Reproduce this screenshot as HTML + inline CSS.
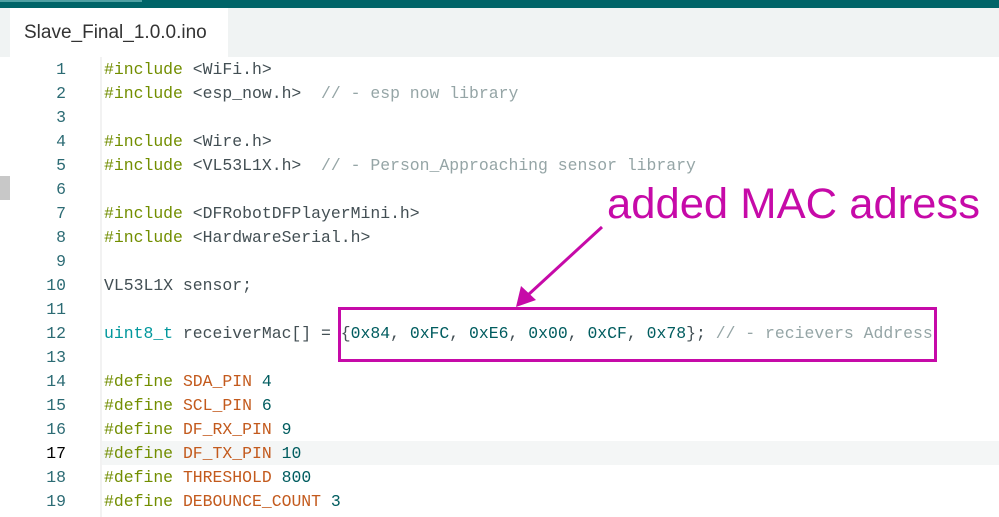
<!DOCTYPE html>
<html><head><style>
body{margin:0;width:999px;height:517px;overflow:hidden;background:#fff;position:relative;font-family:"Liberation Sans",sans-serif}
.top{position:absolute;left:0;top:0;width:999px;height:8px;background:#006468}
.top2{position:absolute;left:0;top:0;width:142px;height:2px;background:#4fa0a3}
.tabbar{position:absolute;left:0;top:8px;width:999px;height:49px;background:#f0f3f3}
.tab{position:absolute;left:10px;top:8px;width:218px;height:49px;background:#fff;font-size:19px;color:#333;line-height:50px;padding-left:14px;box-sizing:border-box}
.hl{position:absolute;left:102px;top:441px;width:897px;height:24px;background:#f4f6f6}
.mark{position:absolute;left:0;top:176px;width:10px;height:24px;background:#c8c8c8}
.gut{position:absolute;left:100px;top:57px;width:2px;height:460px;background:#f2f2f2}
.ln,.code{position:absolute;top:58px;font-family:"Liberation Mono",monospace;font-size:16.45px;line-height:24px;white-space:pre}
.ln{left:30px;width:36px;text-align:right;color:#2c6b74}
.code{left:104px;color:#434f54}
.k{color:#728e00}.c{color:#95a5a6}.d{color:#c35a1d}.n{color:#005c5f}.t{color:#00979c}
</style></head><body>
<div class="top"></div><div class="top2"></div>
<div class="tabbar"></div><div class="tab">Slave_Final_1.0.0.ino</div>
<div class="hl"></div><div class="mark"></div><div class="gut"></div>
<div class="ln">1
2
3
4
5
6
7
8
9
10
11
12
13
14
15
16
<span style="color:#000">17</span>
18
19</div>
<div class="code"><span class="k">#include</span> &lt;WiFi.h&gt;
<span class="k">#include</span> &lt;esp_now.h&gt;  <span class="c">// - esp now library</span>

<span class="k">#include</span> &lt;Wire.h&gt;
<span class="k">#include</span> &lt;VL53L1X.h&gt;  <span class="c">// - Person_Approaching sensor library</span>

<span class="k">#include</span> &lt;DFRobotDFPlayerMini.h&gt;
<span class="k">#include</span> &lt;HardwareSerial.h&gt;

VL53L1X sensor;

<span class="t">uint8_t</span> receiverMac[] = {<span class="n">0x84</span>, <span class="n">0xFC</span>, <span class="n">0xE6</span>, <span class="n">0x00</span>, <span class="n">0xCF</span>, <span class="n">0x78</span>}; <span class="c">// - recievers Address</span>

<span class="k">#define</span> <span class="d">SDA_PIN</span> <span class="n">4</span>
<span class="k">#define</span> <span class="d">SCL_PIN</span> <span class="n">6</span>
<span class="k">#define</span> <span class="d">DF_RX_PIN</span> <span class="n">9</span>
<span class="k">#define</span> <span class="d">DF_TX_PIN</span> <span class="n">10</span>
<span class="k">#define</span> <span class="d">THRESHOLD</span> <span class="n">800</span>
<span class="k">#define</span> <span class="d">DEBOUNCE_COUNT</span> <span class="n">3</span></div>
<svg width="999" height="517" style="position:absolute;left:0;top:0">
<rect x="339.5" y="308.5" width="596" height="52" fill="none" stroke="#c60aa8" stroke-width="3"/>
<line x1="602" y1="227" x2="528" y2="295" stroke="#c60aa8" stroke-width="3"/>
<polygon points="516,307 521,286 536,300" fill="#c60aa8"/>
<text x="607" y="218" font-family="Liberation Sans, sans-serif" font-size="43" fill="#c60aa8" textLength="373" lengthAdjust="spacingAndGlyphs">added MAC adress</text>
</svg>
</body></html>
